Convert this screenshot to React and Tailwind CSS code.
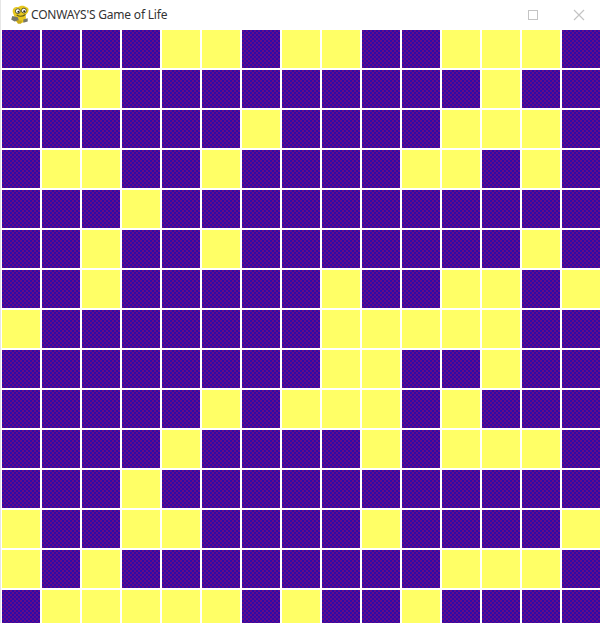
import React from 'react';

// 1 = live cell, 0 = dead cell
const board = [
  '000011011001110',
  '001000000000100',
  '000000100001110',
  '011001000011010',
  '000100000000000',
  '001001000000010',
  '001000001001101',
  '100000001111100',
  '000000001100100',
  '000001011101000',
  '000010000101110',
  '000100000000000',
  '100110000100001',
  '101000000001110',
  '011111010010000',
];

const PygameIcon = () => (
  <svg width="22" height="22" viewBox="0 0 20 20" className="flex-shrink-0">
    <path d="M4 9 C2 5 5 2 8 3 C10 1 14 1 16 3 C19 4 18 8 15 10 C16 13 15 16 12 17 C9 18 6 17 6 14 C5 12 5 11 4 9 Z" fill="#e8c81e" />
    <path d="M6 4 C8 3 9 4 9 5 L6 6 Z" fill="#f6e65a" />
    <circle cx="8" cy="6.5" r="2.2" fill="#fff" stroke="#4a4a20" strokeWidth="0.8" />
    <circle cx="13.5" cy="6" r="2.2" fill="#fff" stroke="#4a4a20" strokeWidth="0.8" />
    <circle cx="8.5" cy="7" r="0.9" fill="#222" />
    <circle cx="13.8" cy="6.5" r="0.9" fill="#222" />
    <path d="M7 10 C10 12 13 11 15 9.5" fill="none" stroke="#5e5a18" strokeWidth="1" />
    <path d="M3 11 L8 12 L9 15 L5 16 L2 14 Z" fill="#77776a" />
    <path d="M13 14 L17 13 L17 16 L13 17 Z" fill="#77776a" />
    <path d="M7 15 L12 15 L11 18 L8 18 Z" fill="#c9a91a" />
  </svg>
);

const TitleBar = () => (
  <div className="h-[30px] flex items-center bg-white flex-shrink-0">
    <div className="ml-[8px]">
      <PygameIcon />
    </div>
    <span className="text-[12px] leading-none text-[#333] whitespace-nowrap font-['Noto_Sans',sans-serif] tracking-[-0.2px]">
      CONWAYS'S Game of Life
    </span>
    <div className="ml-auto flex items-center">
      <div className="w-[10px] h-[10px] border border-[#c4c4c4]" />
      <svg width="12" height="12" viewBox="0 0 12 12" className="ml-[35px] mr-[18px]">
        <path d="M1 1 L11 11 M11 1 L1 11" stroke="#c4c4c4" strokeWidth="1.2" />
      </svg>
    </div>
  </div>
);

const Cell = ({ alive }) => (
  <div
    className={
      alive
        ? 'bg-[#ffff66]'
        : 'bg-[repeating-conic-gradient(#2e0aa8_0_25%,#620a8a_0_50%)] bg-[length:4px_4px]'
    }
  />
);

export default function App() {
  return (
    <div className="w-[603px] h-[623px] overflow-hidden bg-white flex flex-col border-l border-[#e6e6e6]">
      <TitleBar />
      <div className="pl-[1px] grid grid-cols-[repeat(15,38px)] auto-rows-[38px] gap-[2px]">
        {board.map((row, y) =>
          row.split('').map((v, x) => <Cell key={`${y}-${x}`} alive={v === '1'} />)
        )}
      </div>
    </div>
  );
}
